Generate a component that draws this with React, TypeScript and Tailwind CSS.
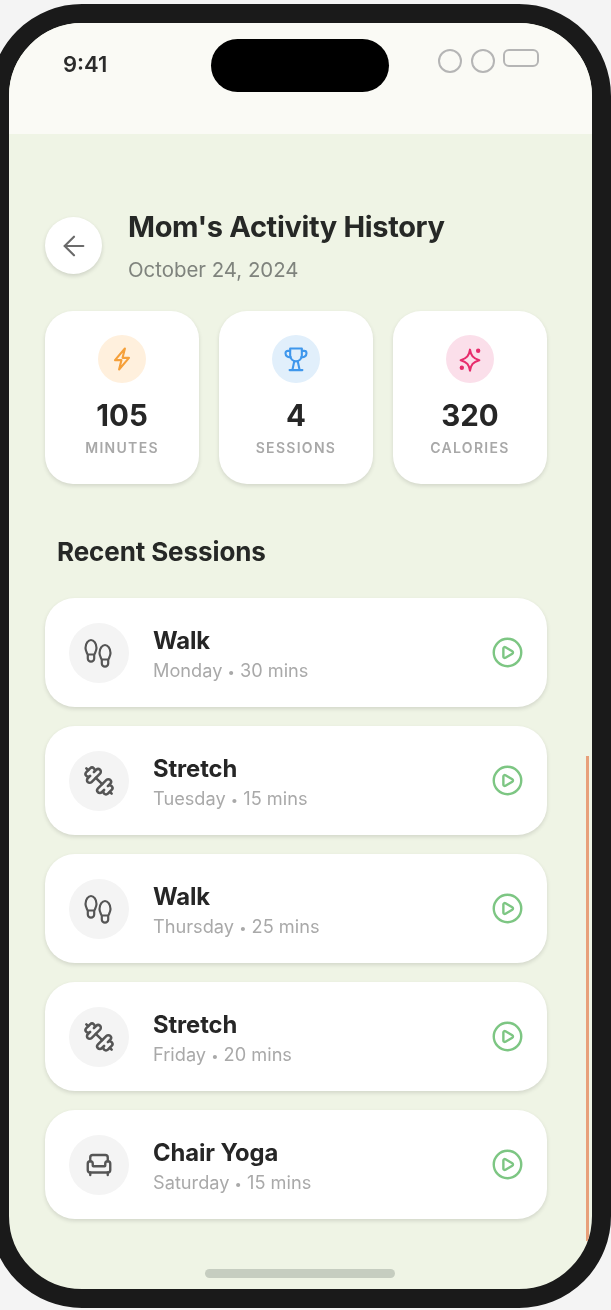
import { ArrowLeft, Dumbbell, Armchair, CirclePlay } from "lucide-react";
import type { ReactNode } from "react";

function Glyph({ size = 24, viewBox = "0 0 24 24", width = 2, children }: { size?: number; viewBox?: string; width?: number; children: ReactNode }) {
  return (
    <svg width={size} height={size} viewBox={viewBox} fill="none" stroke="currentColor" strokeWidth={width} strokeLinecap="round" strokeLinejoin="round">
      {children}
    </svg>
  );
}

const BoltIcon = () => (
  <Glyph size={28} width={1.8}>
    <path d="M14.5 3 6 13h5.5L9.5 21l8.5-10h-5.5z" />
  </Glyph>
);

const CupIcon = () => (
  <Glyph size={28} width={1.8}>
    <path d="M7 3h10v6a5 5 0 0 1-10 0z" />
    <path d="M7 5H5a2 2 0 0 0-2 2a3.5 3.5 0 0 0 4.4 3.4" />
    <path d="M17 5h2a2 2 0 0 1 2 2a3.5 3.5 0 0 1-4.4 3.4" />
    <path d="M10.5 14 9 21M13.5 14 15 21" />
    <path d="M6.5 21.5h11" />
  </Glyph>
);

const StarIcon = () => (
  <Glyph size={28} width={1.8}>
    <path d="M12 4C12.8 9 14.5 11.5 20 13C14.5 14.5 12.8 17 12 22C11.2 17 9.5 14.5 4 13C9.5 11.5 11.2 9 12 4Z" />
    <circle cx="19" cy="5" r="1" fill="currentColor" />
    <circle cx="5" cy="19.5" r="1" fill="currentColor" />
  </Glyph>
);

const ShoesIcon = () => {
  const shoe = "M1.5 10C1.5 5 4.5 2 7 2C9.5 2 12.5 5 12.5 10C12.5 13 10.8 15 10.2 17L10.2 20.5A3.2 3.2 0 0 1 3.8 20.5L3.8 17C3.2 15 1.5 13 1.5 10Z M3.8 16.5H10.2";
  return (
    <Glyph size={32} viewBox="0 0 32 32" width={2.2}>
      <path transform="translate(1 1)" d={shoe} />
      <path transform="translate(15 6)" d={shoe} />
    </Glyph>
  );
};

const DumbbellIcon = () => <Dumbbell size={32} strokeWidth={1.9} className="-scale-x-100" />;
const ChairIcon = () => <Armchair size={30} strokeWidth={1.9} />;

const stats = [
  { Icon: BoltIcon, value: "105", label: "MINUTES", bg: "bg-[#fff0dd]", color: "text-[#f5a03a]" },
  { Icon: CupIcon, value: "4", label: "SESSIONS", bg: "bg-[#e1effb]", color: "text-[#3f97ec]" },
  { Icon: StarIcon, value: "320", label: "CALORIES", bg: "bg-[#fbdfea]", color: "text-[#e72c6c]" },
];

const sessions = [
  { Icon: ShoesIcon, name: "Walk", day: "Monday", mins: "30 mins" },
  { Icon: DumbbellIcon, name: "Stretch", day: "Tuesday", mins: "15 mins" },
  { Icon: ShoesIcon, name: "Walk", day: "Thursday", mins: "25 mins" },
  { Icon: DumbbellIcon, name: "Stretch", day: "Friday", mins: "20 mins" },
  { Icon: ChairIcon, name: "Chair Yoga", day: "Saturday", mins: "15 mins" },
];

export default function App() {
  return (
    <div className="w-[611px] h-[1310px] overflow-hidden bg-[#f4f4f4] pt-1 font-['Inter',sans-serif] blur-[0.4px]">
      <div className="relative -ml-[10px] w-[621px] h-[1304px] rounded-[92px] border-[19px] border-[#1a1a1a] overflow-hidden bg-[#eff4e5] flex flex-col">
        <div className="relative h-[111px] shrink-0 bg-[#fafaf5] flex justify-between pl-[54px] pr-[53px] pt-[26px]">
          <span className="text-[22px] leading-[30px] font-semibold text-[#2b2b2b]">9:41</span>
          <div className="absolute left-[202px] top-[16px] w-[178px] h-[53px] rounded-full bg-black" />
          <div className="flex items-start">
            <span className="w-[24px] h-[24px] rounded-full border-2 border-[#b5b5b5]" />
            <span className="ml-[9px] w-[24px] h-[24px] rounded-full border-2 border-[#b5b5b5]" />
            <span className="ml-[8px] w-[36px] h-[18px] rounded-[6px] border-2 border-[#b5b5b5]" />
          </div>
        </div>

        <div className="flex-1 flex flex-col pl-[36px] pr-[45px] pt-[77px]">
          <div className="flex gap-[26px]">
            <button className="mt-[6px] w-[57px] h-[57px] rounded-full bg-white shadow-[0_2px_4px_rgba(0,0,0,0.14)] flex items-center justify-center text-[#6b6b6b]">
              <ArrowLeft size={32} strokeWidth={1.6} />
            </button>
            <div className="flex flex-col">
              <h1 className="text-[29px] leading-[32px] font-bold tracking-[-0.35px] text-[#262826]">Mom's Activity History</h1>
              <p className="mt-[15px] text-[20.4px] leading-[24px] text-[#7f837d]">October 24, 2024</p>
            </div>
          </div>

          <div className="mt-[29px] grid grid-cols-3 gap-[20px]">
            {stats.map(({ Icon, value, label, bg, color }) => (
              <div key={label} className="h-[173px] rounded-[28px] bg-white shadow-[0_2px_4px_rgba(0,0,0,0.12)] flex flex-col items-center pt-[24px]">
                <div className={`w-[48px] h-[48px] rounded-full flex items-center justify-center ${bg} ${color}`}>
                  <Icon />
                </div>
                <div className="mt-[14px] text-[29.5px] leading-[36px] font-bold text-[#262626]">{value}</div>
                <div className="mt-[5px] text-[14px] leading-[20px] font-semibold tracking-[1.3px] text-[#a8a8a8]">{label}</div>
              </div>
            ))}
          </div>

          <h2 className="mt-[53px] ml-[12px] text-[26px] leading-[30px] font-bold tracking-[-0.1px] text-[#262826]">Recent Sessions</h2>

          <div className="mt-[31px] flex flex-col gap-[19px]">
            {sessions.map(({ Icon, name, day, mins }, i) => (
              <div key={i} className="h-[109px] rounded-[30px] bg-white shadow-[0_2px_4px_rgba(0,0,0,0.12)] flex items-center pl-[24px] pr-[23px]">
                <div className="w-[60px] h-[60px] rounded-full bg-[#f4f4f4] flex items-center justify-center text-[#555555]">
                  <Icon />
                </div>
                <div className="ml-[24px] flex-1 flex flex-col pt-[5px]">
                  <div className="text-[23.8px] leading-[30px] font-bold tracking-[-0.1px] text-[#262626]">{name}</div>
                  <div className="mt-[2px] text-[18.2px] leading-[24px] text-[#a9a9a9]">
                    {day} <span className="text-[13px]">•</span> {mins}
                  </div>
                </div>
                <CirclePlay size={33} strokeWidth={1.75} className="text-[#7dc683]" />
              </div>
            ))}
          </div>
        </div>

        <div className="absolute left-[196px] bottom-[11px] w-[190px] h-[9px] rounded-full bg-[#c6cdc0]" />
        <div className="absolute right-[3px] top-[733px] bottom-[48px] w-[3px] bg-[#e8a07a]" />
      </div>
    </div>
  );
}
